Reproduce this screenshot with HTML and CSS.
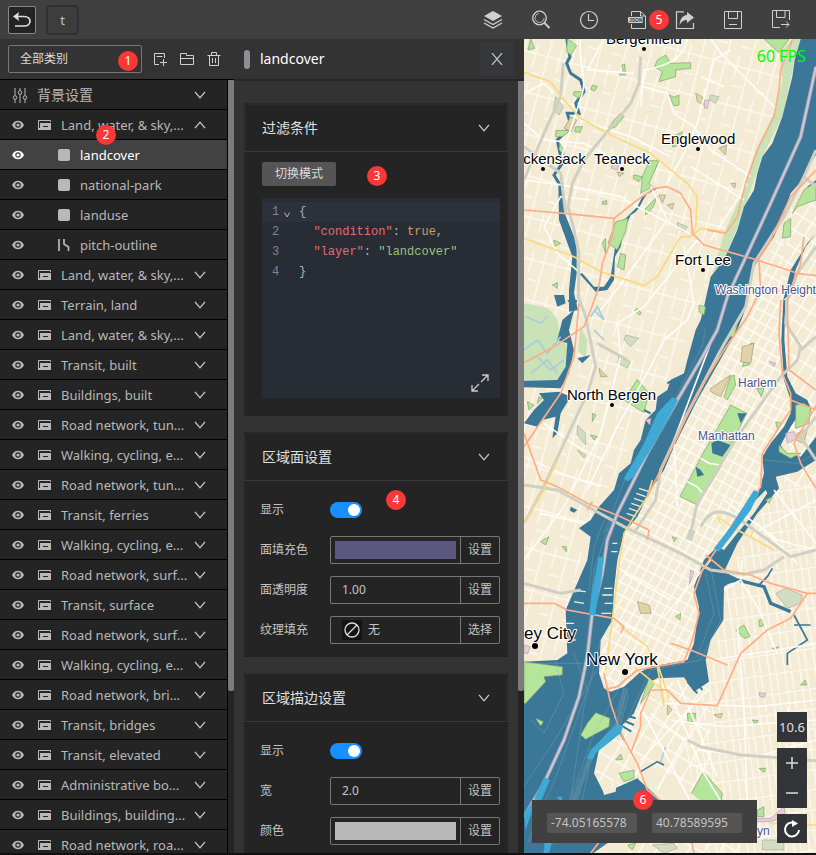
FILE: index.html
```html
<!DOCTYPE html>
<html lang="zh-CN">
<head>
<meta charset="utf-8">
<meta name="viewport" content="width=device-width, initial-scale=1">
<title>landcover</title>
<link rel="stylesheet" href="styles.css">
</head>
<body>
<svg class="sprite" aria-hidden="true">
  <symbol id="eye" viewBox="0 0 12 10"><path fill="currentColor" fill-rule="evenodd" d="M0 5C1.500 2 3.500.7 6 .7S10.500 2 12 5C10.500 8 8.500 9.300 6 9.300S1.500 8 0 5ZM6 2.300A2.700 2.700 0 1 0 6 7.700A2.700 2.700 0 1 0 6 2.300Z"/><circle cx="6" cy="5" r="1.600" fill="currentColor"/></symbol>
  <symbol id="group" viewBox="0 0 14 12"><path fill="none" stroke="currentColor" d="M.5 10V1.500H12.500V3"/><path fill="currentColor" fill-rule="evenodd" d="M2 4H13V11H0V9H2ZM5 7V8H10V7Z"/></symbol>
  <symbol id="down" viewBox="0 0 12 8"><path fill="none" stroke="currentColor" stroke-width="1.300" d="M1 .8 6 6.800 11 .8"/></symbol>
  <symbol id="up" viewBox="0 0 12 8"><path fill="none" stroke="currentColor" stroke-width="1.300" d="M1 7.200 6 1.200 11 7.200"/></symbol>
  <symbol id="area" viewBox="0 0 12 12"><rect width="12" height="12" rx="2" fill="currentColor"/></symbol>
  <symbol id="line" viewBox="0 0 12 12"><path fill="none" stroke="currentColor" stroke-width="1.700" d="M1 0V12M6 0V5L10.500 8V12"/></symbol>
</svg>
<div class="app">
  <header class="topbar">
    <button class="back" aria-label="返回"><svg viewBox="0 0 20 20"><path fill="none" stroke="currentColor" stroke-width="1.700" d="M3 6.500H12C20 6.500 20 16 12 16H3"/><path fill="currentColor" d="M1 6.500 7 2 6 6.500 7 11Z"/></svg></button>
    <button class="project">t</button>
    <nav class="tools">
      <button aria-label="图层"><svg viewBox="0 0 20 20"><path fill="currentColor" d="M10 1 19 6 10 11 1 6Z"/><path fill="none" stroke="currentColor" stroke-width="1.300" d="M1 9.500 10 14.500 19 9.500M1 13 10 18 19 13"/></svg></button>
      <button aria-label="搜索"><svg viewBox="0 0 20 20" fill="none" stroke="currentColor"><circle cx="8.500" cy="8" r="6.800" stroke-width="1.300"/><circle cx="8.500" cy="8" r="4.500" stroke-width=".8" stroke-dasharray="20 8"/><path stroke-width="2" d="M13.500 13 18.500 18"/></svg></button>
      <button aria-label="历史"><svg viewBox="0 0 20 20" fill="none" stroke="currentColor"><circle cx="10" cy="10" r="8.500" stroke-width="1.200"/><path stroke-width="1.200" d="M9.500 4V10.500H15"/></svg></button>
      <button aria-label="导出 JSON"><svg viewBox="0 0 20 20"><path fill="none" stroke="currentColor" d="M4.500 6V1.500H13.500L18.500 6V18.500H4.500V14M13.500 1.500V6H18.500"/><rect x="1" y="7" width="15" height="6" rx="1" fill="currentColor"/><text class="json-label" x="2" y="12">JSON</text></svg><span class="mark mark-5">5</span></button>
      <button aria-label="分享"><svg viewBox="0 0 20 20"><path fill="none" stroke="currentColor" stroke-width="1.200" d="M9 1.800H1.500V18.500H18.500V13"/><path fill="currentColor" d="M12 2 19 7.500 12 13V10C8.500 10 6.500 11.500 4.500 15C5 9 7.500 5.500 12 5Z"/></svg></button>
      <button aria-label="保存"><svg viewBox="0 0 20 20" fill="none" stroke="currentColor"><path d="M1.500 1.500H18.500V18.500H1.500ZM5.500 1.500V8.500H14.500V1.500M6 14.500H14"/></svg></button>
      <button aria-label="另存为"><svg viewBox="0 0 20 20" fill="none" stroke="currentColor"><path d="M9 17.500H1.500V.500H18.500V10M5.500 .500V7.500H14V.500M10 14.500H18M15 11.500 18 14.500 15 17.500"/></svg></button>
    </nav>
  </header>

  <aside class="layers">
    <div class="layer-tools">
      <label class="category"><select aria-label="类别"><option>全部类别</option></select><span class="mark mark-1">1</span></label>
      <button aria-label="新建图层"><svg viewBox="0 0 14 14" fill="none" stroke="currentColor"><path d="M6 12.500H1.500V1.500H11.500V6M3.500 4.500H9.500M10.500 7V14M7 10.500H14"/></svg></button>
      <button aria-label="新建分组"><svg viewBox="0 0 14 14" fill="none" stroke="currentColor"><path d="M.5 1.500H6.500V3.500H13.500V12.500H.5ZM.5 6.500H13.500"/></svg></button>
      <button aria-label="删除"><svg viewBox="0 0 14 14" fill="none" stroke="currentColor"><path d="M.5 3.500H13.500M4.500 3V.500H9.500V3M2.500 3.500V13.500H11.500V3.500M5.500 6V11M8.500 6V11"/></svg></button>
    </div>
    <div class="scroller">
      <ul class="rows">
        <li class="row background"><svg class="sliders" viewBox="0 0 16 16" fill="none" stroke="currentColor"><path d="M3 1V8.500M3 12.500V16M8 1V3.500M8 7.500V16M13 1V8.500M13 12.500V16"/><circle cx="3" cy="10.500" r="1.800"/><circle cx="8" cy="5.500" r="1.800"/><circle cx="13" cy="10.500" r="1.800"/></svg><span class="name">背景设置</span><svg class="arrow"><use href="#down"/></svg></li>
        <li class="row"><svg class="eye"><use href="#eye"/></svg><svg class="kind"><use href="#group"/></svg><span class="name">Land, water, &amp; sky,...</span><svg class="arrow"><use href="#up"/></svg><span class="mark mark-2">2</span></li>
        <li class="row child selected"><svg class="eye"><use href="#eye"/></svg><svg class="type"><use href="#area"/></svg><span class="name">landcover</span></li>
        <li class="row child"><svg class="eye"><use href="#eye"/></svg><svg class="type"><use href="#area"/></svg><span class="name">national-park</span></li>
        <li class="row child"><svg class="eye"><use href="#eye"/></svg><svg class="type"><use href="#area"/></svg><span class="name">landuse</span></li>
        <li class="row child"><svg class="eye"><use href="#eye"/></svg><svg class="type"><use href="#line"/></svg><span class="name">pitch-outline</span></li>
        <li class="row"><svg class="eye"><use href="#eye"/></svg><svg class="kind"><use href="#group"/></svg><span class="name">Land, water, &amp; sky,...</span><svg class="arrow"><use href="#down"/></svg></li>
        <li class="row"><svg class="eye"><use href="#eye"/></svg><svg class="kind"><use href="#group"/></svg><span class="name">Terrain, land</span><svg class="arrow"><use href="#down"/></svg></li>
        <li class="row"><svg class="eye"><use href="#eye"/></svg><svg class="kind"><use href="#group"/></svg><span class="name">Land, water, &amp; sky,...</span><svg class="arrow"><use href="#down"/></svg></li>
        <li class="row"><svg class="eye"><use href="#eye"/></svg><svg class="kind"><use href="#group"/></svg><span class="name">Transit, built</span><svg class="arrow"><use href="#down"/></svg></li>
        <li class="row"><svg class="eye"><use href="#eye"/></svg><svg class="kind"><use href="#group"/></svg><span class="name">Buildings, built</span><svg class="arrow"><use href="#down"/></svg></li>
        <li class="row"><svg class="eye"><use href="#eye"/></svg><svg class="kind"><use href="#group"/></svg><span class="name">Road network, tun...</span><svg class="arrow"><use href="#down"/></svg></li>
        <li class="row"><svg class="eye"><use href="#eye"/></svg><svg class="kind"><use href="#group"/></svg><span class="name">Walking, cycling, e...</span><svg class="arrow"><use href="#down"/></svg></li>
        <li class="row"><svg class="eye"><use href="#eye"/></svg><svg class="kind"><use href="#group"/></svg><span class="name">Road network, tun...</span><svg class="arrow"><use href="#down"/></svg></li>
        <li class="row"><svg class="eye"><use href="#eye"/></svg><svg class="kind"><use href="#group"/></svg><span class="name">Transit, ferries</span><svg class="arrow"><use href="#down"/></svg></li>
        <li class="row"><svg class="eye"><use href="#eye"/></svg><svg class="kind"><use href="#group"/></svg><span class="name">Walking, cycling, e...</span><svg class="arrow"><use href="#down"/></svg></li>
        <li class="row"><svg class="eye"><use href="#eye"/></svg><svg class="kind"><use href="#group"/></svg><span class="name">Road network, surf...</span><svg class="arrow"><use href="#down"/></svg></li>
        <li class="row"><svg class="eye"><use href="#eye"/></svg><svg class="kind"><use href="#group"/></svg><span class="name">Transit, surface</span><svg class="arrow"><use href="#down"/></svg></li>
        <li class="row"><svg class="eye"><use href="#eye"/></svg><svg class="kind"><use href="#group"/></svg><span class="name">Road network, surf...</span><svg class="arrow"><use href="#down"/></svg></li>
        <li class="row"><svg class="eye"><use href="#eye"/></svg><svg class="kind"><use href="#group"/></svg><span class="name">Walking, cycling, e...</span><svg class="arrow"><use href="#down"/></svg></li>
        <li class="row"><svg class="eye"><use href="#eye"/></svg><svg class="kind"><use href="#group"/></svg><span class="name">Road network, bri...</span><svg class="arrow"><use href="#down"/></svg></li>
        <li class="row"><svg class="eye"><use href="#eye"/></svg><svg class="kind"><use href="#group"/></svg><span class="name">Transit, bridges</span><svg class="arrow"><use href="#down"/></svg></li>
        <li class="row"><svg class="eye"><use href="#eye"/></svg><svg class="kind"><use href="#group"/></svg><span class="name">Transit, elevated</span><svg class="arrow"><use href="#down"/></svg></li>
        <li class="row"><svg class="eye"><use href="#eye"/></svg><svg class="kind"><use href="#group"/></svg><span class="name">Administrative bo...</span><svg class="arrow"><use href="#down"/></svg></li>
        <li class="row"><svg class="eye"><use href="#eye"/></svg><svg class="kind"><use href="#group"/></svg><span class="name">Buildings, building...</span><svg class="arrow"><use href="#down"/></svg></li>
        <li class="row"><svg class="eye"><use href="#eye"/></svg><svg class="kind"><use href="#group"/></svg><span class="name">Road network, roa...</span><svg class="arrow"><use href="#down"/></svg></li>
      </ul>
      <div class="track"><div class="thumb"></div></div>
    </div>
  </aside>

  <section class="panel">
    <div class="panel-head"><span class="grip"></span><h1>landcover</h1><button class="close" aria-label="关闭"><svg viewBox="0 0 12 12" fill="none" stroke="currentColor" stroke-width="1.300"><path d="M1 0 11 12M11 0 1 12"/></svg></button></div>
    <div class="scroller">
      <div class="cards">
        <section class="card">
          <h2>过滤条件<svg class="arrow"><use href="#down"/></svg></h2>
          <div class="filter">
            <button class="mode">切换模式</button><span class="mark mark-3">3</span>
            <div class="editor">
              <ol class="code">
                <li class="active"><span class="number">1</span><svg class="fold" viewBox="0 0 6 6"><path fill="none" stroke="currentColor" d="M.5 .500 3 5 5.500 .500"/></svg><code>{</code></li>
                <li><span class="number">2</span><code>  <i class="key">"condition"</i>: <i class="bool">true</i>,</code></li>
                <li><span class="number">3</span><code>  <i class="key">"layer"</i>: <i class="str">"landcover"</i></code></li>
                <li><span class="number">4</span><code>}</code></li>
              </ol>
              <button class="expand" aria-label="全屏"><svg viewBox="0 0 18 18" fill="none" stroke="currentColor" stroke-width="1.300"><path d="M11 1H17V7M17 1 10 8M1 11V17H7M1 17 8 10"/></svg></button>
            </div>
          </div>
        </section>
        <section class="card">
          <h2>区域面设置<svg class="arrow"><use href="#down"/></svg></h2>
          <div class="form">
            <div class="field"><label for="fill-show">显示</label><input class="switch" id="fill-show" type="checkbox" checked><span class="mark mark-4">4</span></div>
            <div class="field"><label for="fill-color">面填充色</label><div class="control"><input class="swatch violet" id="fill-color" type="button" aria-label="面填充色"><button>设置</button></div></div>
            <div class="field"><label for="opacity">面透明度</label><div class="control"><input id="opacity" type="text" value="1.00"><button>设置</button></div></div>
            <div class="field"><span class="label">纹理填充</span><div class="control"><div class="texture"><svg viewBox="0 0 20 20"><circle cx="10" cy="10" r="7"/><path d="M5 15 15 5"/></svg>无</div><button>选择</button></div></div>
          </div>
        </section>
        <section class="card">
          <h2>区域描边设置<svg class="arrow"><use href="#down"/></svg></h2>
          <div class="form">
            <div class="field"><label for="line-show">显示</label><input class="switch" id="line-show" type="checkbox" checked></div>
            <div class="field"><label for="line-width">宽</label><div class="control"><input id="line-width" type="text" value="2.0"><button>设置</button></div></div>
            <div class="field"><label for="line-color">颜色</label><div class="control"><input class="swatch silver" id="line-color" type="button" aria-label="颜色"><button>设置</button></div></div>
          </div>
        </section>
      </div>
      <div class="track"><div class="thumb"></div></div>
    </div>
  </section>

  <main class="map">
    <svg class="chart" viewBox="0 -1 292 815" preserveAspectRatio="xMinYMin slice">
      <defs>
        <pattern id="grid-west" width="74" height="120" patternUnits="userSpaceOnUse" patternTransform="rotate(15)"><path class="street" d="M8 0V120M45 0V70M0 30H74M45 90H74"/></pattern>
        <pattern id="grid-city" width="26" height="34" patternUnits="userSpaceOnUse" patternTransform="rotate(28)"><path class="street" d="M5 0V34M0 8H26"/></pattern>
        <pattern id="grid-bronx" width="34" height="46" patternUnits="userSpaceOnUse" patternTransform="rotate(32)"><path class="street" d="M5 0V46M0 8H34"/></pattern>
        <pattern id="grid-east" width="46" height="60" patternUnits="userSpaceOnUse" patternTransform="rotate(-8)"><path class="street" d="M5 0V60M0 8H46M25 8V60"/></pattern>
        <pattern id="grid-south" width="42" height="54" patternUnits="userSpaceOnUse" patternTransform="rotate(30)"><path class="street" d="M5 0V54M0 8H42"/></pattern>
        <pattern id="ferry" width="7" height="7" patternUnits="userSpaceOnUse" patternTransform="rotate(30)"><rect width="7" height="7" fill="#45b3df"/><path d="M0 3H7" stroke="#318fbb" stroke-width="2"/></pattern>
      </defs>
      <g transform="scale(.33333)">
        <path fill="#f4ebd5" d="M0-3H2000V2500H0Z"/>
        <!-- street grids -->
        <path fill="url(#grid-west)" opacity=".8" d="M0-3H830L690 430 560 760 400 1070 180 1480 130 1860H0Z"/>
        <path fill="url(#grid-bronx)" d="M800 500 2000 200V1340H780L790 1050 770 780Z"/>
        <path fill="url(#grid-city)" d="M780 560 700 700 670 830 460 1190 280 1500 225 1900 260 1955 500 1860 530 1580 710 1340 790 1130 775 780Z"/>
        <path fill="url(#grid-east)" opacity=".8" d="M570 1860 600 1620 760 1330H2000V2500H560L480 2100Z"/>
        <path fill="url(#grid-south)" d="M380 1920 560 1930 560 2200 700 2500H340L200 2160Z"/>
        <!-- green corridors -->
        <g class="pale">
          <path d="M806-3 830-3 812 60 775 230 710 360 650 540 600 660 565 705 600 580 650 470 700 320 755 210 775 120 765 40Z"/>
          <path d="M0 790C60 800 80 800 100 840L110 890 145 940 130 1000 100 1020H0Z"/>
          <path d="M170 860 190 900 185 960 162 930Z"/>
        </g>
        <!-- rivers -->
        <g class="water">
          <path d="M830-3H2000V100L876 345 850 380 835 420 800 460 780 520 750 590 690 680 670 760 660 820 640 870 600 940 560 1010 520 1080 480 1160 450 1220 420 1290 380 1350 340 1430 300 1480 280 1560 270 1650 265 1740 230 1800 225 1900 240 1945 260 1955 300 1940 350 1895 380 1880 490 1860 510 1810 525 1700 510 1640 540 1560 570 1530 640 1440 700 1370 720 1300 715 1250 740 1210 780 1160 800 1120 800 1080 780 1020 772 900 778 780H784L781 900 790 1010 815 1060 850 1080 862 1110 835 1100 820 1130 800 1160 770 1215 785 1240 830 1250 876 1190V1260L820 1295 755 1310 765 1345 700 1420 640 1510 600 1595 640 1615 600 1640 598 1740 560 1800 545 1860 555 1925 510 1955 480 1912 400 1915 370 1930 350 1970 330 2020 290 2060 225 2130 210 2200 240 2260 340 2215 420 2290 200 2445H0V1865L100 1860 130 1840 125 1710 190 1560 200 1490 165 1465 200 1440 225 1400 270 1350 285 1300 320 1270 330 1230 350 1200 365 1140 395 1110 400 1070 430 1050 440 1020 480 1000 490 960 515 870 530 840 540 800 560 710 600 660 640 570 660 500 690 450 700 400 715 350 745 310 775 230 805 110 812 60Z"/>
          <path d="M385 450C350 470 355 510 320 525L300 570 290 620 273 650 270 720 250 750 215 755 165 700 175 700 210 740 240 740 260 710 275 610 300 540 340 500 355 470 410 440Z"/>
          <path d="M103 430 118 430 122 520 158 610 158 700 150 760 162 810 135 815 135 750 145 650 105 540Z"/>
          <path d="M130 780H160L145 830 135 870 150 930 135 1000 110 1045 0 1042V1022L100 1020 125 980 130 910 100 900 115 840 150 810Z"/>
          <path d="M90 765 120 765 125 790 100 800ZM160 955 200 945 175 970ZM105 1055 140 1070 110 1120 100 1180 85 1195 95 1130 55 1140 40 1160 0 1150 30 1110 60 1080 45 1060Z"/>
          <path d="M876 420 850 440 855 455 876 465ZM876 580 845 620 815 690 800 760 778 780 800 690 850 610ZM385 372 400 375 390 395 375 390Z"/>
          <path d="M140 1400 160 1410 150 1418 138 1412Z"/>
        </g>
        <g class="creek">
          <path stroke-width="9" d="M128-3 138 50 128 70 140 100 170 120 180 155 155 190 165 220 130 220 142 260 100 300 108 340 115 370 90 405 105 430"/>
          <path stroke-width="10" d="M590 1630 640 1620 720 1640 740 1690 800 1715"/>
          <path stroke-width="5" d="M700 1640 730 1610 745 1585M810 1725 850 1800 790 1840 790 1875M810 1755 860 1755M350 2195 400 2165 420 2175"/>
        </g>
        <path class="marsh" d="M0 930 40 900 70 940 110 890M20 1000 70 960 100 1000M200 830 220 800 240 840 210 810M5 830 50 850 70 830M40 950 80 990 120 960M210 870 240 900M410 2165 425 2120"/>
        <!-- parks -->
        <g class="park">
          <path d="M400 60 425 45 440 70 500 68 500 85 455 90 455 110 405 125 415 95 392 80ZM293 75 302 72 305 105 285 105 298 92ZM20-3 32 25 12 30ZM130-3 148 8 158 18 140 45 128 35ZM720-3 795-3 765 38Z"/>
          <path d="M375 362 405 362 375 430 385 440 350 460 355 410ZM276 545 312 535 305 575 280 630 252 610ZM290 640 305 645 300 690 280 680ZM805 520 840 450 876 425V480L820 500ZM780 550 800 535 800 590 775 595Z"/>
          <path d="M435 165 450 172 465 165 465 195 450 198ZM205 135 220 140 212 153 200 148ZM455 285 475 275 470 300 455 320 445 320ZM290 220 300 230 275 260 250 270 270 240ZM150 155 175 155 165 175 148 165ZM96 272 140 270 115 290 95 290ZM155 260 175 260 168 278 152 275ZM107 310 120 330 120 345 105 330ZM330 405 355 410 345 425 328 415ZM365 505 400 470 385 505 365 525ZM85 735 100 728 100 745ZM235 485 248 482 248 493 235 492ZM235 610 245 595 245 640ZM90 600 110 610 90 620Z"/>
          <path d="M340 1018 375 1060 360 1118 300 1080ZM630 1005 635 1035 610 1080 600 1070 620 1010ZM680 910 690 910 675 975 655 980ZM525 795 545 800 540 825 525 815ZM610 890 640 855 630 890ZM815 1095 840 1090 860 1105 855 1150 815 1165ZM765 1215 790 1240 830 1240 800 1255 765 1235ZM340 805 352 820 345 825 332 810ZM10 1085 30 1095 15 1110ZM45 1070 55 1075 40 1090ZM205 1120 216 1125 205 1145ZM200 1185 220 1190 210 1200ZM698 1045 720 1045 712 1070ZM755 1145 775 1150 760 1165Z"/>
          <path d="M0 1865 115 1880 115 1905 60 1910 65 1925 5 1990 0 1990ZM215 2018 258 2035 255 2060 185 2098 170 2085 190 2050ZM285 2200 330 2190 330 2215 300 2225ZM538 2195 595 2260 590 2290 485 2290ZM35 2035 58 2045 50 2058ZM490 2020 515 2020 512 2045 492 2045ZM455 1730 470 1720 468 1740ZM635 1770 660 1755 678 1790 660 1795ZM705 1740 718 1738 718 1758 706 1760ZM685 2040 702 2042 695 2055ZM745 1825 765 1820 755 1830ZM830 1935 843 1920 848 1935ZM275 2160 290 2142 296 2158ZM310 2415 335 2410 325 2430ZM705 2185 725 2185 720 2197ZM50 1505 75 1490 65 1515ZM115 1520 127 1520 127 1535ZM700 2310 720 2300 720 2330 700 2330Z"/>
          <path d="M375 1915 390 1935 350 1990ZM725 1380 745 1370 735 1390ZM445 1490 458 1495 450 1505Z"/>
        </g>
        <g class="khaki">
          <path d="M515 160 535 170 540 195 520 185ZM585 325 608 315 605 345ZM405 465 425 465 415 490ZM430 495 450 490 445 508ZM620 430 635 430 632 445ZM140 230 158 240 142 275 120 265ZM560 1045 620 1005 590 1070 560 1055ZM655 920 690 910 680 970 650 965ZM340 1685 375 1695 382 1720 350 1720ZM280 395 300 400 285 410ZM225 985 250 1010 230 1010ZM255-3 280-3 280 10 258 10ZM430 1995 445 2010 430 2025ZM570 2025 595 2020 590 2035ZM820 1180 850 1165 840 1210 815 1200Z"/>
        </g>
        <g class="sage">
          <path d="M560 165 585 170 575 190 555 180ZM95 170 118 200 105 225 88 210ZM460 548 490 560 480 575 462 565ZM305 885 345 895 320 920 300 900ZM285 945 318 965 310 985 282 970ZM160 1155 185 1180 185 1215 160 1185ZM160 1230 185 1245 180 1255ZM755 1660 785 1645 835 1665 830 1690 790 1705ZM715 2400 780 2400 780 2430 715 2430ZM385 2415 450 2410 460 2425 420 2440Z"/>
        </g>
        <path class="mauve" d="M265 370 285 372 280 390 262 385ZM540 180 555 180 550 205 542 205ZM785 1180 810 1175 820 1195 790 1210ZM365 1140 380 1135 378 1155ZM705 1958 725 1960 722 1972 708 1970ZM700 2335 740 2335 780 2300 785 2330 740 2345 700 2345ZM500 1590 510 1595 495 1640ZM0 1815 18 1820 12 1840 0 1840ZM735 965 755 970 750 980Z"/>
        <!-- islands and piers -->
        <path fill="#f4ebd5" d="M690 1385 725 1350 730 1360 690 1420 640 1480 600 1530 590 1525 650 1445ZM235 2240 270 2240 270 2200 280 2210 275 2255 240 2265ZM345 2220 430 2290 540 2290 400 2180Z"/>
        <path class="pier" d="M265 1645H240M265 1665H235M265 1690H242M262 1720H232M345 1345 375 1355M337 1360 365 1370M330 1375 358 1385M322 1390 350 1400M315 1405 343 1415M308 1420 335 1430M280 1510 265 1510M280 1535 262 1535M140 1650 185 1655M150 1685 180 1690M125 1750 150 1750M130 1800 155 1800"/>
        <path class="dock" d="M300 2025 335 2035M295 2040 330 2055M290 2055 322 2075M285 2070 300 2100M490 1925 520 1960M505 1910 535 1950M520 1895 550 1925M430 1030 455 1015M380 1120 360 1110"/>
        <!-- minor roads -->
        <g class="road">
          <path d="M170-3C160 60 190 110 175 160L110 360M240-3 190 90 330 100M490-3C480 60 420 80 360 90L350 200M560-3 600 50 700 150 755 205M620 30 570 60 520 250 480 340 430 430M0 420 150 440 290 470 330 495 495 580M355 140 430 160 450 220 510 260 560 330 680 410M90 160 60 130 0 160M200 480 110 470 60 560 100 640 170 700M670 430 600 540 560 600M0 250 60 300 180 310 240 340M170 240 320 290 440 350M380 440 430 540 300 720 230 810M520 600 440 700 360 800 280 850 290 950 230 1180 120 1400 0 1560M480 620 510 790 490 840 420 900 380 980 280 1160 190 1350M0 1250 110 1300 230 1340M60 1150 160 1220 240 1260M50 1420 180 1450M500 380 660 480M530 110 600 140"/>
          <path d="M400 1915 450 1990 490 2080 540 2200 600 2300M420 1990 700 2000 876 1980M560 1860 760 1830 876 1810M640 1760 660 2000 670 2300M600 1650 650 1620 700 1700 760 1840M650 1600 655 1560M380 2020 480 2100 400 2250M350 2160 550 1950M440 2040 600 2060 876 2040M350 2000 560 2400M876 2100 700 2150 520 2130M460 1920 580 2210M790 2000 820 2180M290 1750 400 1800M420 1730 560 1560M300 1600 440 1680M600 1380 760 1500 876 1530M670 1490 876 1380M750 1350 876 1510M700 1450 820 1570M560 910 450 1200 460 1400"/>
        </g>
        <!-- Central Park -->
        <path class="park" d="M620 1095 668 1120 585 1290 520 1395 468 1370 540 1235Z"/>
        <path class="water" d="M562 1210 580 1200 620 1215 595 1250 565 1240ZM640 1120 668 1120 650 1150ZM515 1280 530 1290 540 1305 520 1310Z"/>
        <path class="road" d="M530 1255 555 1270 590 1275M490 1325 520 1340 540 1365"/>
        <!-- railways -->
        <g class="rail">
          <path d="M350 50 345 130 320 190 180 360 145 430 132 500 150 570 165 640 163 770 185 830 215 980 190 1060 50 1360 0 1450"/>
          <path d="M118 70 110 170 60 280 0 420M0 320 110 400 125 520M220 910 310 960M0 1335 100 1350 300 1460 470 1540 560 1590 660 1603 720 1590 780 1550"/>
          <path d="M876 330 840 410 780 530 690 670 665 800 590 930 480 1140 410 1290 395 1380 330 1480M876 620 820 700 790 780 785 850 830 920 820 960 770 1010 640 1190 520 1390 495 1500M530 1460C560 1400 600 1410 650 1440L800 1550 876 1530M840 410 876 440M830 930 876 890M0 1630 110 1660 170 1650M490 2100 530 2120 650 2145 876 2162M876 1130 830 1190 876 1260"/>
          <path stroke-width="20" d="M505 1470 495 1500"/>
        </g>
        <!-- arterials -->
        <g class="yellow">
          <path d="M0 97 80 125 120 180 170 235 260 285 380 340 490 430 520 470 515 560 500 590M0 595 150 650 230 695 360 737 400 710 440 640 470 590 500 590 530 565 600 575M100 1260 60 1350 0 1450M385 1320 370 1370 330 1430 300 1480 285 1570 270 1700 245 1890M290 1760 370 1820 400 1880 420 1990M330 1880 410 1945 420 2000M400 1870 435 1975M580 1430 640 1470 750 1530M580 1430 590 1450M740 2350 876 2355M680 1490 690 1470"/>
        </g>
        <g class="orange">
          <path d="M0 510 120 520 270 535 340 480 390 445 430 440 470 460 500 510 505 580 540 615 700 660 820 700 876 707"/>
          <path d="M270 535 265 590 235 670 225 740 200 810 180 860 90 920 0 968M165 790 150 950 110 1060 0 1220M0 1180 50 1320 100 1340 190 1390 290 1430 375 1470 370 1500M205 1385 190 1410M0 1690 90 1690 130 1710 270 1735 300 1760 290 1780M240 1900 260 1990 290 2080 340 2170 370 2250 420 2290M245 1948 280 1940 340 1890 480 1865 505 1800 525 1720 510 1660 535 1590 590 1510 640 1430 710 1340 715 1240 760 1170 800 1110 800 1060 775 1000 765 880 770 780"/>
          <path d="M806-3 770 90 765 150 750 230 700 330 665 430 640 530 605 580 550 570M840 590 830 670 790 780 795 990 876 1050M800 1080 876 1110M880 1090 810 1210 830 1270 876 1345M545 1545 600 1590 680 1605 740 1630 850 1660 876 1660M850 1660 800 1735 730 1770 650 1840 580 1997 470 1990 430 1950 380 1950 350 2020 350 2060 320 2140M440 1810 500 1830 610 1875M500 2390 510 2440M230 2400 200 2440M705 660 710 750 670 830 600 930 520 1060 460 1190 370 1370M876 390 800 470 740 600 700 660"/>
        </g>
        <!-- ferries and tunnels -->
        <g class="wake">
          <path d="M545 860 535 920 450 1080M310 1300 240 1480M260 1440 210 1590 180 1900 150 2020 20 2330M240 1440 210 1520 195 1650M225 1880 165 1980 80 2120 0 2240M310 1900 210 2080 130 2300M90 1850 120 1960 60 2080 20 2040M230 1800 180 2000 140 2280M560 1580 590 1740 530 1860 380 1890 280 2100M545 1600 570 1720 520 1850M720 1260 820 1270 876 1240M310 1950 275 2060M315 1960 285 2070M150 1840 190 1950 100 2200 10 2410M300 1950 260 2060M0 1870 180 1870M195 2150 130 2400M200 2160 150 2400"/>
        </g>
        <g class="wide-wake"><path d="M305 1945 280 2050 200 2150 130 2330 60 2440"/></g>
        <path class="border-case" d="M876 80 830 290 740 490 680 620 610 770 580 870 530 960 460 1080 370 1240 280 1420 250 1500 235 1600 205 1720 190 1850 165 1970 120 2100 60 2230 0 2330"/>
        <path class="border-core" d="M876 80 830 290 740 490 680 620 610 770 580 870 530 960 460 1080 370 1240 280 1420 250 1500 235 1600 205 1720 190 1850 165 1970 120 2100 60 2230 0 2330"/>
        <g fill="url(#ferry)"><path d="M445 1072 462 1080 420 1160 385 1220 330 1310 310 1325 300 1315 355 1220 400 1120ZM224 1550H240L232 1620 213 1725 195 1725 205 1650ZM690 1350 706 1358 680 1410 620 1490 585 1535 570 1525 620 1460ZM275 2055 298 2055 290 2080 215 2140 205 2160 188 2155 200 2130ZM60 2212 78 2220 50 2285 30 2278ZM0 2320 25 2285 25 2310 5 2370ZM98 2270 115 2270 112 2285ZM62 2400 85 2400 75 2440 60 2440Z"/></g>
      </g>
      <g class="towns">
        <text x="82" y="4">Bergenfield</text><text x="137" y="104">Englewood</text><text x="-20" y="124">Hackensack</text><text x="70" y="124">Teaneck</text><text x="151" y="225">Fort Lee</text><text x="43" y="360">North Bergen</text>
      </g>
      <g class="cities"><text x="-32" y="599">Jersey City</text><text x="62" y="625">New York</text></g>
      <g class="areas"><text x="191" y="254">Washington Heights</text><text x="214" y="347">Harlem</text><text x="174" y="400">Manhattan</text><text x="199" y="795">Brooklyn</text></g>
      <g class="dots"><circle cx="120" cy="9" r="2"/><circle cx="174" cy="109" r="2"/><circle cx="19" cy="129" r="2"/><circle cx="98" cy="129" r="2"/><circle cx="179" cy="230" r="2"/><circle cx="88" cy="365" r="2"/><circle cx="11" cy="606" r="3"/><circle cx="101" cy="632" r="3"/></g>
    </svg>
    <output class="fps">60 FPS</output>
    <div class="position"><input type="text" aria-label="经度" value="-74.05165578"><input type="text" aria-label="纬度" value="40.78589595"><span class="mark mark-6">6</span></div>
    <div class="controls">
      <output class="level">10.6</output>
      <div class="zoom"><button aria-label="放大"><svg viewBox="0 0 12 12"><path d="M6 0V12M0 6H12"/></svg></button><button aria-label="缩小"><svg viewBox="0 0 12 12"><path d="M0 6H12"/></svg></button></div>
      <button class="reset" aria-label="重置"><svg viewBox="0 0 18 18"><path fill="none" stroke="currentColor" stroke-width="2" d="M10 2.500A7 7 0 1 0 16 10"/><path fill="currentColor" d="M9 0 15 3.500 9 7Z"/></svg></button>
    </div>
  </main>
</div>
</body>
</html>
```
FILE: styles.css
```css
* { box-sizing: border-box; }
body { margin: 0; background: #111; color: #c4c4c4; font: 14px/20px "Noto Sans", "Noto Sans CJK SC", sans-serif; }
button, input, select { margin: 0; padding: 0; border: 0; background: none; color: inherit; font: inherit; }
button { cursor: pointer; }
h1, h2, ul, ol { margin: 0; padding: 0; font-weight: 400; list-style: none; }
.sprite { position: absolute; width: 0; height: 0; }
svg { display: block; flex: none; }

.app { display: grid; grid-template: 39px minmax(0, 1fr) / 234px 290px minmax(0, 1fr); height: 100vh; padding-bottom: 2px; }

.topbar { grid-column: 1 / -1; display: flex; align-items: center; padding: 0 11px 0 8px; background: #404040; }
.back { display: grid; place-items: center; width: 28px; height: 28px; border: 1px solid #888; border-radius: 2px; background: #242424; }
.back svg { width: 20px; height: 20px; color: #ddd; }
.project { width: 33px; height: 30px; margin-left: 10px; border: 2px solid #303036; border-radius: 4px; background: #3d3d3d; font-size: 13px; }
.tools { display: flex; margin-left: auto; }
.tools button { position: relative; display: grid; place-items: center; width: 48px; height: 39px; color: #d0d0d0; }
.tools svg { width: 20px; height: 20px; }
.json-label { fill: #333; font: bold 5px "Liberation Sans", sans-serif; }

.mark { position: absolute; z-index: 2; width: 20px; height: 20px; border-radius: 50%; background: #fa3838; color: #fff; font-size: 12px; line-height: 20px; text-align: center; }
.mark-1 { top: 6px; right: 4px; }
.mark-2 { top: 15px; left: 96px; }
.mark-3 { top: 14px; left: 123px; }
.mark-4 { top: 0; left: 126px; }
.mark-5 { top: 10px; left: 36px; }
.mark-6 { top: -10px; left: 101px; }

.layers, .panel { display: flex; flex-direction: column; min-height: 0; background: #333; }
.layer-tools { display: flex; align-items: center; gap: 13px; height: 41px; padding: 0 0 1px 8px; border-bottom: 1px solid #000; }
.category { position: relative; width: 134px; margin-right: -2px; }
.category select { display: block; width: 100%; height: 28px; padding-left: 11px; border: 1px solid #777; border-radius: 2px; appearance: none; font-size: 12px; color: #ddd; }
.layer-tools svg { width: 14px; height: 14px; color: #d0d0d0; }
.scroller { flex: 1; display: flex; min-height: 0; }
.track { flex: none; width: 6px; background: #242424; }
.thumb { height: 79%; border-radius: 0 0 2px 2px; background: #7b7b7b; }
.rows { flex: 1; min-width: 0; overflow: hidden; border-right: 1px solid #000; }
.row { position: relative; display: flex; align-items: center; height: 30px; padding: 0 21px 0 12px; border-bottom: 1px solid #000; background: #242424; color: #b8b8b8; font-size: 13px; white-space: nowrap; }
.background { font-size: 14px; }
.name { flex: 1; min-width: 0; }
.eye { width: 12px; height: 10px; }
.kind { width: 14px; height: 12px; margin: 0 9px 0 14px; }
.sliders { width: 16px; height: 16px; margin-right: 9px; }
.arrow { width: 12px; height: 8px; color: #ccc; }
.type { width: 12px; height: 12px; margin: 0 10px 0 34px; }
.selected { background: #424242; color: #fff; }
.selected .type { color: #b8b8b8; }

.panel-head { display: flex; align-items: center; height: 42px; padding: 0 10px; border-bottom: 2px solid #262626; color: #fff; }
.grip { width: 6px; height: 19px; margin-right: 10px; border-radius: 3px; background: #8b8f96; }
.panel-head h1 { flex: 1; font-size: 14px; }
.close { display: grid; place-items: center; width: 34px; height: 34px; background: #36373b; color: #bbb; }
.close svg { width: 12px; height: 12px; }
.cards { flex: 1; display: flex; flex-direction: column; gap: 16px; min-width: 0; padding: 22px 10px 0; overflow: hidden; }
.card { flex: none; background: #242424; }
.card h2 { display: flex; align-items: center; justify-content: space-between; height: 49px; padding: 0 16px; border: 2px solid #2a2a2e; border-bottom: 1px solid #3a3a3c; border-radius: 4px 4px 0 0; color: #e0e0e0; font-size: 14px; }
.filter { position: relative; display: flex; flex-direction: column; align-items: flex-start; gap: 12px; padding: 10px 8px 18px 18px; }
.mode { width: 74px; height: 24px; border-radius: 2px; background: #555; color: #ddd; font-size: 12px; }
.editor { position: relative; width: 100%; height: 200px; padding-top: 4px; background: #282c34; color: #abb2bf; }
.code li { position: relative; display: flex; height: 20px; }
.code .active { background: #2c313c; }
.code, .code code { font: 12px/20px "Liberation Mono", monospace; }
.code i { font-style: normal; }
.code code { white-space: pre; }
.number { width: 37px; padding-left: 10px; color: #7d8799; }
.fold { position: absolute; top: 10px; left: 22px; width: 6px; height: 6px; }
.key { color: #e06c75; }
.bool { color: #d19a66; }
.str { color: #98c379; }
.expand { position: absolute; right: 11px; bottom: 6px; color: #ccc; }
.expand svg { width: 18px; height: 18px; }

.form { padding: 9px 8px 7px 16px; font-size: 12px; }
.field { position: relative; display: flex; align-items: center; height: 40px; }
.field > label, .label { width: 70px; }
.switch { position: relative; width: 32px; height: 16px; border-radius: 8px; background: #1890ff; appearance: none; }
.switch::after { content: ""; position: absolute; top: 2px; right: 2px; width: 12px; height: 12px; border-radius: 50%; background: #fff; }
.control { flex: 1; display: flex; min-width: 0; height: 28px; border: 1px solid #777; border-radius: 2px; }
.control input, .texture { flex: 1; min-width: 0; padding-left: 11px; }
.control button { width: 39px; border-left: 1px solid #777; }
.control .swatch { margin: 4px; padding: 0; }
.violet { background: #5b5880; }
.silver { background: #b8b8b8; }
.texture { display: flex; align-items: center; gap: 6px; }
.texture svg { width: 20px; height: 20px; background: #141414; fill: none; stroke: #ddd; stroke-width: 1.3; }

.map { position: relative; overflow: hidden; background: #f4ebd5; }
.chart { width: 100%; height: 100%; }
.street, .road { fill: none; stroke: #fffdf8; stroke-width: 4; }
.road { stroke-width: 5; stroke-linejoin: round; }
.pale { fill: #c9e2b7; }
.water { fill: #3b7897; }
.creek { fill: none; stroke: #3b7897; }
.marsh { fill: none; stroke: #a9cdda; stroke-width: 5; }
.park { fill: #b5e49b; stroke: #7f9d69; stroke-width: 2; }
.khaki { fill: #e0d3aa; stroke: #9f9874; stroke-width: 2; }
.sage { fill: #d2dcc0; stroke: #a7b096; stroke-width: 2; }
.mauve { fill: #e6cfd8; stroke: #b39ba8; stroke-width: 2; }
.pier { fill: none; stroke: #f4ebd5; stroke-width: 4; }
.dock { fill: none; stroke: #3b7897; stroke-width: 6; }
.rail { fill: none; stroke: #d0d0c2; stroke-width: 9; stroke-linejoin: round; }
.yellow { fill: none; stroke: #f9da80; stroke-width: 5; stroke-linejoin: round; }
.orange { fill: none; stroke: #ffad86; stroke-width: 5; stroke-linejoin: round; }
.wake { fill: none; stroke: #8fb0bd; stroke-width: 1; }
.wide-wake { fill: none; stroke: #6391a8; stroke-width: 15; stroke-dasharray: 2 2; }
.border-case { fill: none; stroke: #a5a3b7; stroke-width: 11; stroke-linejoin: round; }
.border-core { fill: none; stroke: #cbc7d3; stroke-width: 6; stroke-linejoin: round; }
.towns, .cities, .areas { font-family: "Liberation Sans", sans-serif; paint-order: stroke; stroke: #fff; stroke-width: 2px; stroke-linejoin: round; }
.towns { font-size: 15px; }
.cities { font-size: 17px; }
.areas { fill: #4d5388; font-size: 12px; }
.fps { position: absolute; top: 5px; right: 10px; color: #0f0; font-size: 16px; line-height: 24px; }
.position { position: absolute; left: 8px; bottom: 10px; display: flex; gap: 15px; padding: 13px 15px 10px; background: #404040; }
.position input { width: 90px; height: 20px; padding-left: 4px; border-radius: 2px; background: #555; font-size: 12px; }
.controls { position: absolute; right: 9px; bottom: 10px; display: flex; flex-direction: column; gap: 6px; color: #e0e0e0; }
.level { height: 30px; background: #333438; line-height: 30px; text-align: center; font-size: 13px; }
.zoom { background: #333438; }
.zoom button { display: grid; place-items: center; width: 30px; height: 30px; }
.zoom svg { width: 12px; height: 12px; stroke: #ddd; stroke-width: 1.5; }
.reset { display: grid; place-items: center; width: 30px; height: 29px; background: #333438; color: #fff; }
.reset svg { width: 18px; height: 18px; }
```
